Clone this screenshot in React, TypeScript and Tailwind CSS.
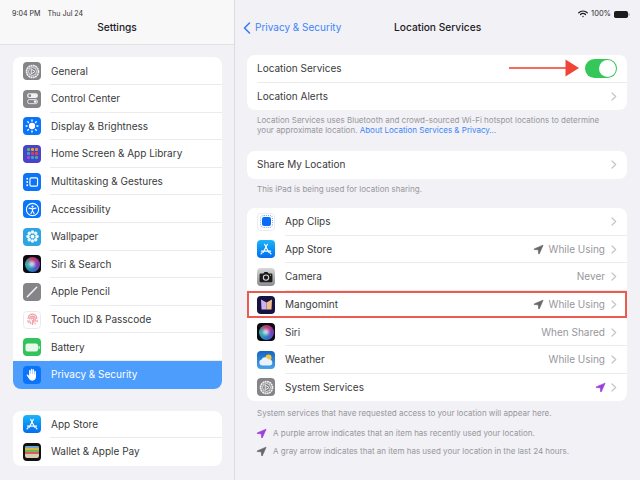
import type { ReactNode } from "react";

const Tile = ({ className, children }: { className: string; children?: ReactNode }) => (
  <div className={`w-[18px] h-[18px] rounded-[4px] shrink-0 flex items-center justify-center overflow-hidden ${className}`}>
    {children}
  </div>
);

const Nav = ({ color, size = 11 }: { color: string; size?: number }) => (
  <svg width={size} height={size} viewBox="0 0 24 24" className="shrink-0">
    <path d="M22 2.500 L2.500 10.800 Q1.800 11.600 3 12 L11.600 12.600 L12.400 21.400 Q13 22.400 13.700 21.400 Z" fill={color} stroke={color} strokeWidth="1.500" strokeLinejoin="round" />
  </svg>
);

const Chevron = () => (
  <svg width="6" height="9" viewBox="0 0 6 9" className="shrink-0">
    <path d="M1 1 L4.700 4.500 L1 8" fill="none" stroke="#c4c4c7" strokeWidth="1.200" strokeLinecap="round" strokeLinejoin="round" />
  </svg>
);

const GearIcon = () => (
  <Tile className="bg-[#858589]">
    <svg width="15" height="15" viewBox="0 0 24 24">
      <circle cx="12" cy="12" r="9.500" fill="none" stroke="#f0f0f2" strokeWidth="2.800" strokeDasharray="3 0.700" />
      <circle cx="12" cy="12" r="6.400" fill="none" stroke="#f0f0f2" strokeWidth="1.300" />
      <path d="M10 8 L16 12 L10 16 Z" fill="none" stroke="#f0f0f2" strokeWidth="1.500" strokeLinejoin="round" />
    </svg>
  </Tile>
);

const ControlIcon = () => (
  <Tile className="bg-[#858589]">
    <svg width="13" height="13" viewBox="0 0 24 24">
      <rect x="2" y="2.500" width="20" height="8.500" rx="4.200" fill="#f2f2f2" />
      <circle cx="7" cy="6.700" r="2.600" fill="#858589" />
      <rect x="2.800" y="14" width="18.400" height="7.500" rx="3.700" fill="none" stroke="#f2f2f2" strokeWidth="1.600" />
      <circle cx="17" cy="17.700" r="2.600" fill="#f2f2f2" />
    </svg>
  </Tile>
);

const BrightnessIcon = () => (
  <Tile className="bg-[#0a74fb]">
    <svg width="14" height="14" viewBox="0 0 24 24" stroke="#fff" strokeWidth="2.400" strokeLinecap="round">
      <circle cx="12" cy="12" r="5.400" fill="#fff" stroke="none" />
      <path d="M12 1.800v1.600M12 20.600v1.600M1.800 12h1.600M20.600 12h1.600M4.800 4.800l1.100 1.100M18.100 18.100l1.100 1.100M4.800 19.200l1.100-1.100M18.100 5.900l1.100-1.100" />
    </svg>
  </Tile>
);

const HomeIcon = () => (
  <Tile className="bg-[#4744c8]">
    <div className="grid grid-cols-3 gap-[1px]">
      {["#53b86b", "#e2a13a", "#e8913a", "#3fa3c9", "#d8404a", "#e0434f", "#a04fc7", "#3b9fe0", "#3fae9a"].map((c, i) => (
        <div key={i} className="w-[3px] h-[3px] rounded-[1px]" style={{ backgroundColor: c }} />
      ))}
    </div>
  </Tile>
);

const MultitaskIcon = () => (
  <Tile className="bg-[#0a74fb]">
    <svg width="14" height="14" viewBox="0 0 24 24" fill="#fff">
      <rect x="8.500" y="5" width="13" height="14" rx="2" fill="none" stroke="#fff" strokeWidth="2" />
      <circle cx="3.800" cy="6.500" r="1.600" />
      <circle cx="3.800" cy="12" r="1.600" />
      <circle cx="3.800" cy="17.500" r="1.600" />
    </svg>
  </Tile>
);

const AccessIcon = () => (
  <Tile className="bg-[#0a74fb]">
    <svg width="15" height="15" viewBox="0 0 24 24">
      <circle cx="12" cy="12" r="9.800" fill="none" stroke="#fff" strokeWidth="1.700" />
      <circle cx="12" cy="7.200" r="1.800" fill="#fff" />
      <path d="M6.500 9.800 L12 11 L17.500 9.800 M12 11 V14 L9.500 18.500 M12 14 L14.500 18.500" fill="none" stroke="#fff" strokeWidth="1.700" strokeLinecap="round" strokeLinejoin="round" />
    </svg>
  </Tile>
);

const WallpaperIcon = () => (
  <Tile className="bg-[#2ea5e2]">
    <svg width="15" height="15" viewBox="0 0 24 24" fill="#fff">
      <circle cx="12" cy="12" r="3" />
      {[0, 45, 90, 135, 180, 225, 270, 315].map((a) => (
        <circle key={a} cx="12" cy="4.800" r="2.800" fillOpacity="0.9" transform={`rotate(${a} 12 12)`} />
      ))}
    </svg>
  </Tile>
);

const SiriIcon = () => (
  <Tile className="bg-[#0b0b12]">
    <div className="w-[15px] h-[15px] rounded-full bg-[conic-gradient(#c92f60,#7a3bb8,#2a78c8,#2fb0a8,#c92f60)] flex items-center justify-center">
      <div className="w-[6px] h-[6px] rounded-full bg-[#cfe0f4] blur-[1.5px]" />
    </div>
  </Tile>
);

const PencilIcon = () => (
  <Tile className="bg-[#858589]">
    <svg width="14" height="14" viewBox="0 0 24 24">
      <path d="M4 20 L20 4" stroke="#f4f4f4" strokeWidth="2.600" strokeLinecap="round" />
    </svg>
  </Tile>
);

const TouchIcon = () => (
  <Tile className="bg-white border border-[#ececee]">
    <svg width="13" height="13" viewBox="0 0 24 24" fill="none" stroke="#f2a0aa" strokeWidth="2.400" strokeLinecap="round">
      <path d="M4 10a8 8 0 0 1 16 0M3.500 14a8.500 8.500 0 0 0 1 3M7 11a5 5 0 0 1 10 0v4M10 11a2 2 0 0 1 4 0v6M12 14v7M7 14.500c0 2 .7 3.500 1.800 5M20.500 13.500v2.500M16.500 19l.5 1" />
    </svg>
  </Tile>
);

const BatteryIcon = () => (
  <Tile className="bg-[#32c45a]">
    <svg width="15" height="9" viewBox="0 0 15 9">
      <rect x="0.500" y="0.500" width="12.500" height="8" rx="2" fill="#e9f8ec" />
      <rect x="13.500" y="3" width="1.200" height="3" rx="0.500" fill="#e9f8ec" />
    </svg>
  </Tile>
);

const HandIcon = () => (
  <Tile className="bg-[#0a74fb]">
    <svg width="14" height="15" viewBox="0 0 24 24" fill="#fff">
      <path d="M7 12V5.500a1.300 1.300 0 0 1 2.600 0V11h.5V3.500a1.300 1.300 0 0 1 2.600 0V11h.5V4.500a1.300 1.300 0 0 1 2.600 0V12h.5V7.500a1.300 1.300 0 0 1 2.600 0V16c0 4-2.600 6.500-6.300 6.500-3 0-4.600-1.200-6-3.600L3 13.800c-.8-1.400 1.200-2.600 2.200-1.400L7 14.500z" />
    </svg>
  </Tile>
);

const StoreIcon = () => (
  <Tile className="bg-gradient-to-b from-[#1fb4f8] to-[#0a6cf0]">
    <svg width="14" height="14" viewBox="0 0 24 24" fill="none" stroke="#fff" strokeWidth="2" strokeLinecap="round">
      <path d="M9.500 4 L17 18 M14.500 4 L7 18 M4 15.500 H20 M3.500 20.500 L5 18.500 M20.500 20.500 L19 18.500" />
    </svg>
  </Tile>
);

const WalletIcon = () => (
  <Tile className="bg-[#111]">
    <div className="w-[14px] h-[12px] rounded-[2px] overflow-hidden flex flex-col bg-[#d8cdb8]">
      <div className="h-[2px] bg-[#6aa6d8]" />
      <div className="h-[2px] bg-[#e0b23c]" />
      <div className="h-[2px] bg-[#63b768]" />
      <div className="h-[2px] bg-[#d95f4f]" />
    </div>
  </Tile>
);

const ClipsIcon = () => (
  <Tile className="bg-white border border-[#ececee]">
    <div className="w-[9px] h-[9px] rounded-[2px] bg-[#0a6cf5] outline-1 outline-dotted outline-offset-1 outline-[#7fb0f5]" />
  </Tile>
);

const CameraIcon = () => (
  <Tile className="bg-gradient-to-b from-[#d8d8da] to-[#8c8c90]">
    <svg width="14" height="12" viewBox="0 0 24 20">
      <path d="M3 4 H7.500 L9.500 1.500 H14.500 L16.500 4 H21 A2 2 0 0 1 23 6 V17 A2 2 0 0 1 21 19 H3 A2 2 0 0 1 1 17 V6 A2 2 0 0 1 3 4Z" fill="#1c1c1e" />
      <circle cx="12" cy="11" r="4.600" fill="none" stroke="#d8d8da" strokeWidth="1.800" />
      <circle cx="19.800" cy="6.800" r="1" fill="#e5c04a" />
    </svg>
  </Tile>
);

const MangoIcon = () => (
  <Tile className="bg-[#161342]">
    <svg width="13" height="11" viewBox="0 0 13 11">
      <path d="M1 0.500 L6.500 3.500 V10.500 H1.500 Z" fill="#c8b4ee" />
      <path d="M12 0.500 L6.500 3.500 V10.500 H11.500 Z" fill="#f3bd8e" />
    </svg>
  </Tile>
);

const WeatherIcon = () => (
  <Tile className="bg-gradient-to-b from-[#1565c0] to-[#4aa3e8]">
    <svg width="16" height="14" viewBox="0 0 16 14">
      <circle cx="10.500" cy="4.500" r="3" fill="#f5c63c" />
      <path d="M4 12.500 A3 3 0 0 1 3.600 6.600 A3.600 3.600 0 0 1 10.300 6.500 A3 3 0 0 1 12 12.500 Z" fill="#e9f1fa" />
    </svg>
  </Tile>
);

type SideItem = { label: string; icon: ReactNode; active?: boolean };

const sideMain: SideItem[] = [
  { label: "General", icon: <GearIcon /> },
  { label: "Control Center", icon: <ControlIcon /> },
  { label: "Display & Brightness", icon: <BrightnessIcon /> },
  { label: "Home Screen & App Library", icon: <HomeIcon /> },
  { label: "Multitasking & Gestures", icon: <MultitaskIcon /> },
  { label: "Accessibility", icon: <AccessIcon /> },
  { label: "Wallpaper", icon: <WallpaperIcon /> },
  { label: "Siri & Search", icon: <SiriIcon /> },
  { label: "Apple Pencil", icon: <PencilIcon /> },
  { label: "Touch ID & Passcode", icon: <TouchIcon /> },
  { label: "Battery", icon: <BatteryIcon /> },
  { label: "Privacy & Security", icon: <HandIcon />, active: true },
];

const sideOther: SideItem[] = [
  { label: "App Store", icon: <StoreIcon /> },
  { label: "Wallet & Apple Pay", icon: <WalletIcon /> },
];

const SideRow = ({ item, last }: { item: SideItem; last: boolean }) => (
  <div className={`relative h-[27.6px] flex items-center pl-[10px] gap-[10px] ${item.active ? "bg-[#4c9dfc] text-white" : "text-[#3a3a3c]"}`}>
    {item.icon}
    <span className="text-[10px] whitespace-nowrap">{item.label}</span>
    {!last && !item.active && <div className="absolute left-[37px] right-0 bottom-0 h-px bg-[#ebebee]" />}
  </div>
);

const Sidebar = () => (
  <div className="w-[235px] shrink-0 h-full bg-[#f1f1f6] border-r border-[#dcdce0]">
    <div className="h-[45px] bg-[#f8f8f9] border-b border-[#e2e2e5] pt-[9px]">
      <div className="flex gap-[7px] pl-[12px] text-[7.1px] leading-[9px] text-[#2c2c2e]">
        <span>9:04 PM</span>
        <span>Thu Jul 24</span>
      </div>
      <div className="text-center text-[10.2px] leading-[13px] font-medium text-[#1c1c1e] mt-[3px]">Settings</div>
    </div>
    <div className="pl-[13px] pr-[12px] pt-[12.4px]">
      <div className="bg-white rounded-[8px] overflow-hidden">
        {sideMain.map((it, i) => (
          <SideRow key={it.label} item={it} last={i === sideMain.length - 1} />
        ))}
      </div>
      <div className="bg-white rounded-[8px] overflow-hidden mt-[22px]">
        {sideOther.map((it, i) => (
          <SideRow key={it.label} item={it} last={i === sideOther.length - 1} />
        ))}
      </div>
    </div>
  </div>
);

type AppRow = { label: string; icon: ReactNode; value?: string; nav?: string; highlight?: boolean };

const apps: AppRow[] = [
  { label: "App Clips", icon: <ClipsIcon /> },
  { label: "App Store", icon: <StoreIcon />, value: "While Using", nav: "#68686c" },
  { label: "Camera", icon: <CameraIcon />, value: "Never" },
  { label: "Mangomint", icon: <MangoIcon />, value: "While Using", nav: "#68686c", highlight: true },
  { label: "Siri", icon: <SiriIcon />, value: "When Shared" },
  { label: "Weather", icon: <WeatherIcon />, value: "While Using" },
  { label: "System Services", icon: <GearIcon />, nav: "#9b3fdc" },
];

const Sep = ({ left }: { left: string }) => <div className={`absolute ${left} right-0 bottom-0 h-px bg-[#ebebee]`} />;

const Foot = ({ children, className = "" }: { children: ReactNode; className?: string }) => (
  <div className={`text-[8px] leading-[10px] text-[#97979b] px-[10px] ${className}`}>{children}</div>
);

const Detail = () => (
  <div className="flex-1 h-full bg-[#f1f1f6] relative">
    <div className="h-[44px] pt-[9px]">
      <div className="flex items-center justify-end gap-[2px] pr-[10px] h-[10px] text-[7.500px] text-[#2c2c2e]">
        <svg width="10" height="8" viewBox="0 0 20 15" fill="none" stroke="#1c1c1e" strokeWidth="2.400" strokeLinecap="round">
          <path d="M1.500 5a12 12 0 0 1 17 0M5 8.500a7 7 0 0 1 10 0" />
          <circle cx="10" cy="12.500" r="1.300" fill="#1c1c1e" stroke="none" />
        </svg>
        <span className="ml-[1px]">100%</span>
        <svg width="16" height="7" viewBox="0 0 16 7" className="ml-[1px]">
          <rect x="0" y="0" width="14" height="7" rx="1.800" fill="#1c1c1e" />
          <rect x="14.500" y="2.300" width="1" height="2.400" rx="0.500" fill="#8e8e93" />
        </svg>
      </div>
      <div className="flex items-center h-[13px] mt-[2px] relative">
        <svg width="8" height="12" viewBox="0 0 8 12" className="ml-[8px]">
          <path d="M6.500 1 L1.500 6 L6.500 11" fill="none" stroke="#2f7cf6" strokeWidth="1.500" strokeLinecap="round" strokeLinejoin="round" />
        </svg>
        <span className="ml-[4px] text-[10px] text-[#3d85f7]">Privacy &amp; Security</span>
        <span className="absolute left-[159px] text-[10.2px] font-medium text-[#1c1c1e]">Location Services</span>
      </div>
    </div>
    <div className="px-[12px] pt-[11px]">
      <div className="bg-white rounded-[8px] w-[380px] overflow-hidden">
        <div className="relative h-[27.5px] flex items-center justify-between px-[10px] text-[10px] text-[#3a3a3c]">
          <span>Location Services</span>
          <div className="w-[32px] h-[19px] rounded-full bg-[#34c759] flex items-center justify-end pr-[1px]">
            <div className="w-[17px] h-[17px] rounded-full bg-white" />
          </div>
          <Sep left="left-[10px]" />
        </div>
        <div className="h-[27.5px] flex items-center justify-between px-[10px] text-[10px] text-[#3a3a3c]">
          <span>Location Alerts</span>
          <Chevron />
        </div>
      </div>
      <Foot className="mt-[5px]">
        Location Services uses Bluetooth and crowd-sourced Wi-Fi hotspot locations to determine<br />
        your approximate location. <span className="text-[#3d85f7]">About Location Services &amp; Privacy…</span>
      </Foot>
      <div className="bg-white rounded-[8px] w-[380px] h-[27.5px] flex items-center justify-between px-[10px] text-[10px] text-[#3a3a3c] mt-[16px]">
        <span>Share My Location</span>
        <Chevron />
      </div>
      <Foot className="mt-[5px]">This iPad is being used for location sharing.</Foot>
      <div className="relative bg-white rounded-[8px] w-[380px] mt-[14.5px]">
        {apps.map((a, i) => (
          <div key={a.label} className="relative h-[27.6px] flex items-center pl-[10px] pr-[10px] gap-[10px] text-[10px] text-[#3a3a3c]">
            {a.icon}
            <span className="flex-1 whitespace-nowrap">{a.label}</span>
            <div className="flex items-center gap-[5px]">
              {a.nav && <Nav color={a.nav} />}
              {a.value && <span className="text-[#97979b] mr-[1px]">{a.value}</span>}
              <Chevron />
            </div>
            {i < apps.length - 1 && <Sep left="left-[38px]" />}
            {a.highlight && <div className="absolute inset-0 border-2 border-[#ee5a50]" />}
          </div>
        ))}
      </div>
      <Foot className="mt-[6.5px]">System services that have requested access to your location will appear here.</Foot>
      <div className="flex items-center gap-[6px] pl-[9px] mt-[10px] text-[8px] leading-[10px] text-[#97979b]">
        <Nav color="#9b3fdc" />
        <span>A purple arrow indicates that an item has recently used your location.</span>
      </div>
      <div className="flex items-center gap-[6px] pl-[9px] mt-[7px] text-[8px] leading-[10px] text-[#97979b]">
        <Nav color="#68686c" />
        <span>A gray arrow indicates that an item has used your location in the last 24 hours.</span>
      </div>
    </div>
    <svg width="72" height="20" viewBox="0 0 72 20" className="absolute left-[274px] top-[58px]">
      <path d="M0 10 H58" stroke="#ee3b2b" strokeWidth="1.400" />
      <path d="M56.500 1.500 L70 10 L56.500 18.500 Z" fill="#ee4536" />
    </svg>
  </div>
);

export default function App() {
  return (
    <div className="w-[640px] h-[480px] flex overflow-hidden font-['Inter','Liberation_Sans',sans-serif]">
      <Sidebar />
      <Detail />
    </div>
  );
}
